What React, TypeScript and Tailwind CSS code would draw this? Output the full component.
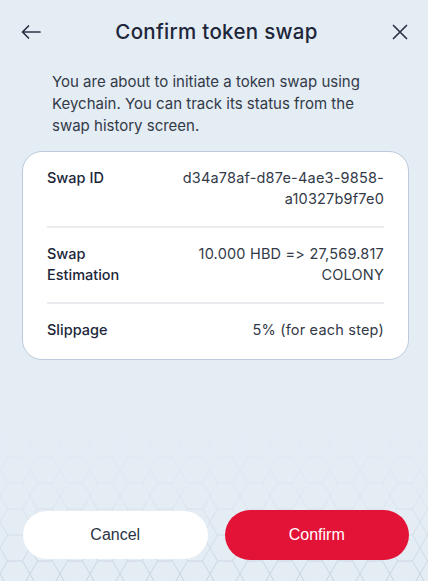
import React from "react";

const rows = [
  { label: ["Swap ID"], value: ["d34a78af-d87e-4ae3-9858-", "a10327b9f7e0"] },
  { label: ["Swap", "Estimation"], value: ["10.000 HBD => 27,569.817", "COLONY"] },
  { label: ["Slippage"], value: ["5% (for each step)"] },
];

const HexBackground = () => (
  <svg
    className="absolute left-0 bottom-0 w-full h-[150px] pointer-events-none"
    viewBox="0 0 428 150"
    preserveAspectRatio="none"
  >
    <defs>
      <pattern id="hex" width="30" height="26" patternUnits="userSpaceOnUse">
        <path
          d="M7.5 0 L22.5 0 L30 13 L22.5 26 L7.5 26 L0 13 Z"
          fill="none"
          stroke="#c3d0dc"
          strokeWidth="1"
        />
      </pattern>
      <linearGradient id="fade" x1="0" y1="0" x2="0" y2="1">
        <stop offset="0" stopColor="#fff" stopOpacity="0" />
        <stop offset="0.5" stopColor="#fff" stopOpacity="0.25" />
        <stop offset="1" stopColor="#fff" stopOpacity="0.85" />
      </linearGradient>
      <mask id="m">
        <rect width="428" height="150" fill="url(#fade)" />
      </mask>
    </defs>
    <rect width="428" height="150" fill="url(#hex)" mask="url(#m)" />
  </svg>
);

export default function App() {
  return (
    <div
      className="relative w-full h-[581px] overflow-hidden bg-[#e4ecf4] flex flex-col text-[#262b38] [font-feature-settings:'calt'_0,'liga'_0]"
      style={{ fontFamily: "Inter, 'Noto Sans', sans-serif" }}
    >
      <HexBackground />

      <div className="relative h-[64px] flex items-center justify-between px-[21px]">
        <svg width="20" height="16" viewBox="0 0 20 16" className="text-[#2c3345]">
          <path d="M19 8 H1.5 M7.5 2 L1.5 8 L7.5 14" fill="none" stroke="currentColor" strokeWidth="1.7" strokeLinecap="round" strokeLinejoin="round" />
        </svg>
        <h1 className="text-[20.5px] font-medium text-[#20263a] tracking-[0.3px]">Confirm token swap</h1>
        <svg width="16" height="16" viewBox="0 0 16 16" className="mr-[-1px] text-[#2c3345]">
          <path d="M1.5 1.5 L14.5 14.5 M14.5 1.5 L1.5 14.5" fill="none" stroke="currentColor" strokeWidth="1.7" strokeLinecap="round" />
        </svg>
      </div>

      <p className="relative mt-[7px] pl-[52px] pr-[48px] text-[15px] leading-[22px] text-[#333a48]">
        You are about to initiate a token swap using Keychain. You can track its status from the swap history screen.
      </p>

      <div className="relative mt-[14px] ml-[22px] mr-[19px] bg-white rounded-[20px] border border-[#bccadb] px-[24px]">
        {rows.map((row, i) => (
          <div key={i}>
            {i > 0 && <div className="h-[2px] bg-[#e9ebef]" />}
            <div
              className={
                "flex justify-between pt-[14.5px] text-[14.5px] leading-[21px] " +
                (i === rows.length - 1 ? "pb-[19.5px]" : "pb-[17.5px]")
              }
            >
              <div className="font-medium text-[#20263a]">
                {row.label.map((l) => (
                  <div key={l}>{l}</div>
                ))}
              </div>
              <div className="text-right text-[#333a48] tracking-[0.2px]">
                {row.value.map((v) => (
                  <div key={v}>{v}</div>
                ))}
              </div>
            </div>
          </div>
        ))}
      </div>

      <div className="flex-1" />

      <div className="relative flex gap-[17px] pl-[23px] pr-[19px] pb-[21px] items-center">
        <button
          className="flex-1 h-[48px] rounded-full bg-white text-[16px] text-[#2c3345]"
          style={{ fontFamily: "'Liberation Sans', Arial, sans-serif" }}
        >
          Cancel
        </button>
        <button
          className="flex-1 h-[50px] rounded-full bg-[#e31337] text-[16px] text-white"
          style={{ fontFamily: "'Liberation Sans', Arial, sans-serif" }}
        >
          Confirm
        </button>
      </div>
    </div>
  );
}
